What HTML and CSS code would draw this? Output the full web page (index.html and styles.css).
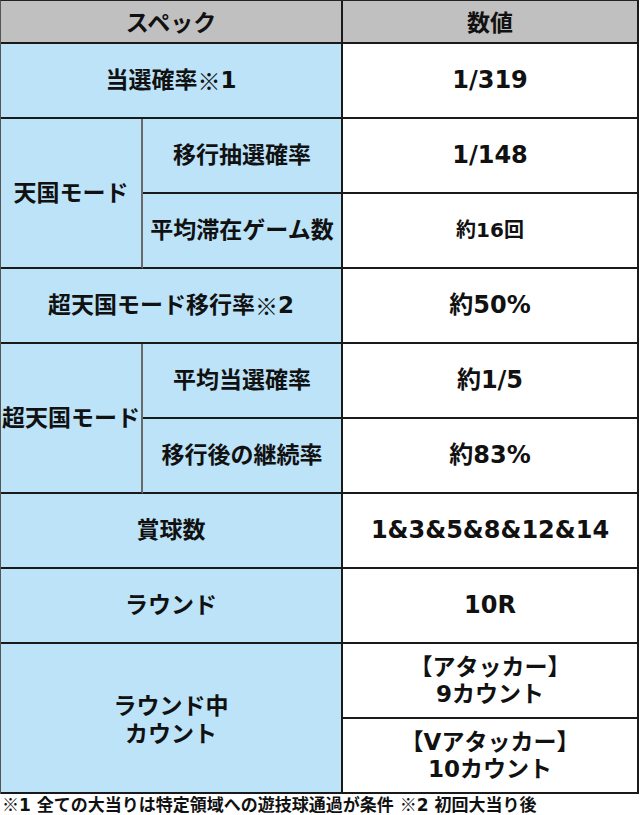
FILE: index.html
```html
<!DOCTYPE html>
<html lang="ja">
<head>
<meta charset="utf-8">
<title>スペック</title>
<link rel="stylesheet" href="styles.css">
</head>
<body>
<div class="spec">
  <div class="cell head span2">スペック</div>
  <div class="cell head">数値</div>

  <div class="cell label span2">当選確率<span class="kome">※</span>1</div>
  <div class="cell value">1/319</div>

  <div class="cell label group rows2">天国モード</div>
  <div class="cell label">移行抽選確率</div>
  <div class="cell value">1/148</div>
  <div class="cell label">平均滞在ゲーム数</div>
  <div class="cell value small">約16回</div>

  <div class="cell label span2">超天国モード移行率<span class="kome">※</span>2</div>
  <div class="cell value">約50%</div>

  <div class="cell label group rows2">超天国モード</div>
  <div class="cell label">平均当選確率</div>
  <div class="cell value">約1/5</div>
  <div class="cell label">移行後の継続率</div>
  <div class="cell value">約83%</div>

  <div class="cell label span2">賞球数</div>
  <div class="cell value">1&amp;3&amp;5&amp;8&amp;12&amp;14</div>

  <div class="cell label span2">ラウンド</div>
  <div class="cell value">10R</div>

  <div class="cell label span2 rows2 multi">ラウンド中<br>カウント</div>
  <div class="cell value multi">【アタッカー】<br>9カウント</div>
  <div class="cell value multi">【Vアタッカー】<br>10カウント</div>
</div>
<p class="note"><span class="kome">※</span>1 全ての大当りは特定領域への遊技球通過が条件 <span class="kome">※</span>2 初回大当り後</p>
</body>
</html>
```

FILE: styles.css
```css
* {
  box-sizing: border-box;
}

html, body {
  margin: 0;
  padding: 0;
  background: #ffffff;
}

body {
  width: 640px;
  font-family: "DejaVu Sans", "Noto Sans CJK JP", sans-serif;
  font-weight: 700;
  color: #111111;
}

.spec {
  display: grid;
  width: 639px;
  grid-template-columns: 142px 200px 1fr;
  grid-template-rows: 43px repeat(10, 75px);
  border-top: 1px solid #222222;
  border-left: 1px solid #555555;
}

.cell {
  display: flex;
  align-items: center;
  justify-content: center;
  text-align: center;
  white-space: nowrap;
  border-right: 2px solid #1a1a1a;
  border-bottom: 2px solid #1a1a1a;
  font-size: 23px;
  line-height: 27px;
  min-width: 0;
}

.kome {
  font-family: "Noto Sans CJK JP", sans-serif;
}

.span2 {
  grid-column: span 2;
}

.rows2 {
  grid-row: span 2;
}

.head {
  background: #c0c0c0;
  font-family: "Noto Sans CJK JP", sans-serif;
  font-size: 23px;
}

.label {
  background: #bce3f8;
}

.group {
  border-right-color: #6a6a6a;
}

.value {
  background: #ffffff;
  font-size: 24px;
}

.value.small {
  font-size: 20px;
}

.value.multi {
  font-size: 23px;
}

.label.multi {
  line-height: 28px;
  padding-top: 4px;
}

.note {
  margin: 0;
  padding: 1px 0 0 2px;
  font-size: 17px;
  line-height: 19px;
  white-space: nowrap;
}

.note .kome {
  display: inline-block;
  line-height: 17px;
}
```
